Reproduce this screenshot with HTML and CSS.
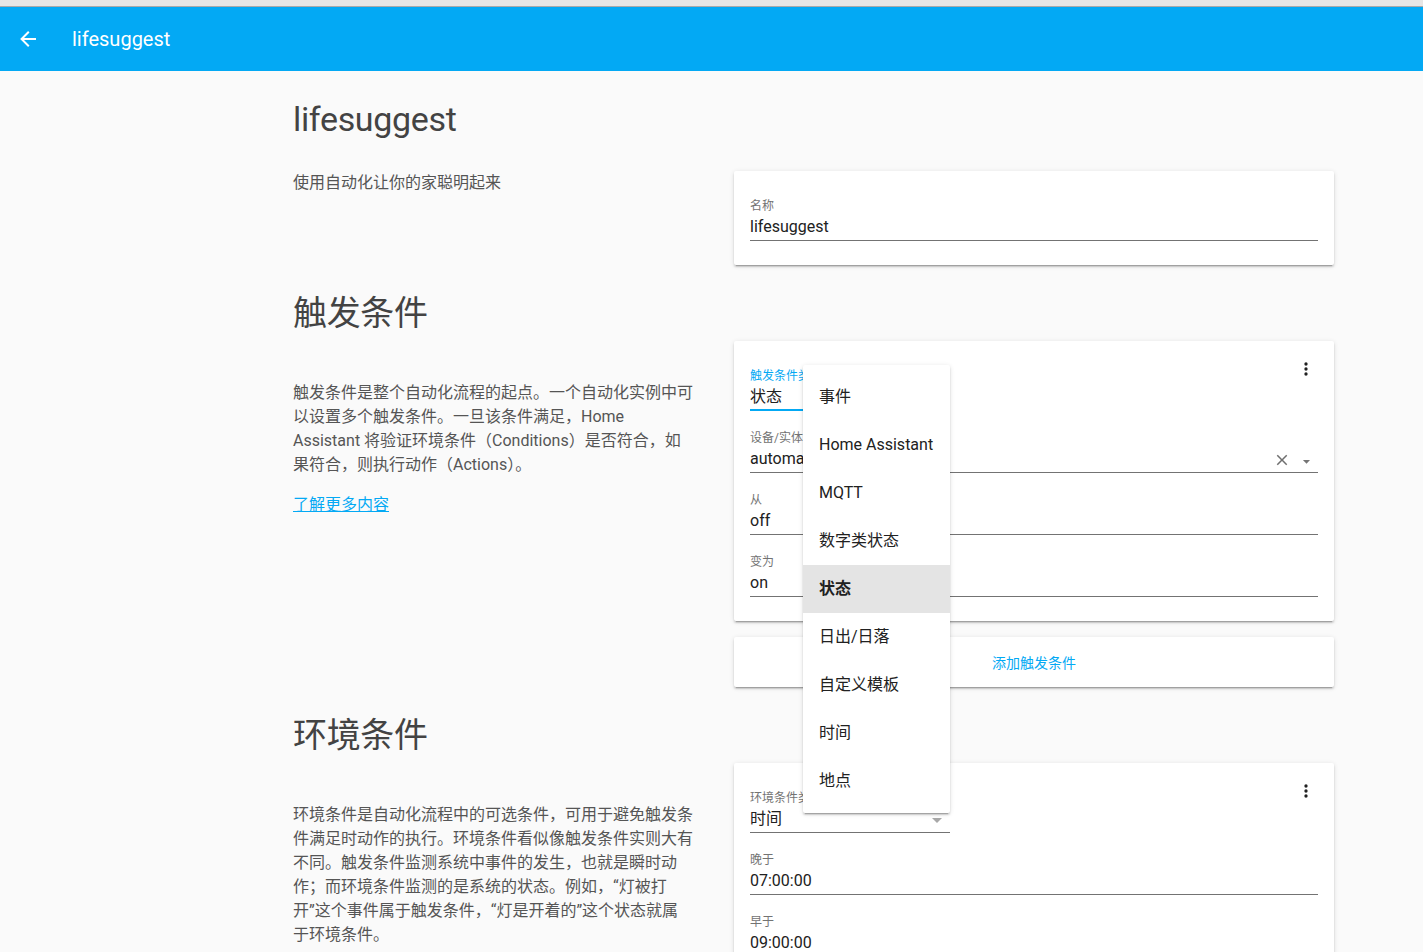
FILE: index.html
```html
<!DOCTYPE html>
<html lang="zh-CN">
<head>
<meta charset="utf-8">
<title>lifesuggest</title>
<link rel="stylesheet" href="styles.css">
</head>
<body>
<div class="browser-strip"></div>
<header class="toolbar">
  <span class="back-btn">
    <svg viewBox="0 0 24 24" width="24" height="24"><path fill="#fff" d="M20,11V13H8L13.5,18.5L12.08,19.92L4.16,12L12.08,4.08L13.5,5.5L8,11H20Z"/></svg>
  </span>
  <div class="toolbar-title">lifesuggest</div>
</header>

<main class="content">
  <section class="config-section">
    <h1 class="section-header">lifesuggest</h1>
    <div class="together">
      <div class="intro">使用自动化让你的家聪明起来</div>
      <div class="panel">
        <div class="card card-first">
          <div class="card-content">
            <div class="field">
              <div class="field-label">名称</div>
              <div class="field-value"><span class="value-text">lifesuggest</span></div>
            </div>
          </div>
        </div>
      </div>
    </div>
  </section>

  <section class="config-section">
    <h1 class="section-header">触发条件</h1>
    <div class="together">
      <div class="intro">
        <p class="intro-p">触发条件是整个自动化流程的起点。一个自动化实例中可<br>以设置多个触发条件。一旦该条件满足，Home<br>Assistant 将验证环境条件（Conditions）是否符合，如<br>果符合，则执行动作（Actions）。</p>
        <a class="learn-more" href="#">了解更多内容</a>
      </div>
      <div class="panel">
        <div class="card">
          <span class="menu-btn">
            <svg viewBox="0 0 24 24" width="20" height="20"><path fill="#212121" d="M12,16A2,2 0 0,1 14,18A2,2 0 0,1 12,20A2,2 0 0,1 10,18A2,2 0 0,1 12,16M12,10A2,2 0 0,1 14,12A2,2 0 0,1 12,14A2,2 0 0,1 10,12A2,2 0 0,1 12,10M12,4A2,2 0 0,1 14,6A2,2 0 0,1 12,8A2,2 0 0,1 10,6A2,2 0 0,1 12,4Z"/></svg>
          </span>
          <div class="card-content">
            <div class="field dropdown focused">
              <div class="field-label">触发条件类型</div>
              <div class="field-value"><span class="value-text">状态</span></div>
            </div>
            <div class="field">
              <div class="field-label">设备/实体</div>
              <div class="field-value">
                <span class="value-text">automation.lifesuggest</span>
                <span class="clear-btn">
                  <svg viewBox="0 0 24 24" width="18" height="18"><path fill="#6f6f6f" d="M19,6.41L17.59,5L12,10.59L6.41,5L5,6.41L10.59,12L5,17.59L6.41,19L12,13.41L17.59,19L19,17.59L13.41,12L19,6.41Z"/></svg>
                </span>
                <span class="toggle-btn">
                  <svg viewBox="0 0 24 24" width="17" height="17"><path fill="#757575" d="M7,10L12,15L17,10H7Z"/></svg>
                </span>
              </div>
            </div>
            <div class="field">
              <div class="field-label">从</div>
              <div class="field-value"><span class="value-text">off</span></div>
            </div>
            <div class="field">
              <div class="field-label">变为</div>
              <div class="field-value"><span class="value-text">on</span></div>
            </div>
          </div>

          <ul class="listbox">
            <li class="item">事件</li>
            <li class="item">Home Assistant</li>
            <li class="item">MQTT</li>
            <li class="item">数字类状态</li>
            <li class="item selected">状态</li>
            <li class="item">日出/日落</li>
            <li class="item">自定义模板</li>
            <li class="item">时间</li>
            <li class="item">地点</li>
          </ul>
        </div>
        <div class="card card-action">
          <span class="text-btn">添加触发条件</span>
        </div>
      </div>
    </div>
  </section>

  <section class="config-section">
    <h1 class="section-header">环境条件</h1>
    <div class="together">
      <div class="intro">
        <p class="intro-p">环境条件是自动化流程中的可选条件，可用于避免触发条<br>件满足时动作的执行。环境条件看似像触发条件实则大有<br>不同。触发条件监测系统中事件的发生，也就是瞬时动<br>作；而环境条件监测的是系统的状态。例如，“灯被打<br>开”这个事件属于触发条件，“灯是开着的”这个状态就属<br>于环境条件。</p>
      </div>
      <div class="panel">
        <div class="card">
          <span class="menu-btn">
            <svg viewBox="0 0 24 24" width="20" height="20"><path fill="#212121" d="M12,16A2,2 0 0,1 14,18A2,2 0 0,1 12,20A2,2 0 0,1 10,18A2,2 0 0,1 12,16M12,10A2,2 0 0,1 14,12A2,2 0 0,1 12,14A2,2 0 0,1 10,12A2,2 0 0,1 12,10M12,4A2,2 0 0,1 14,6A2,2 0 0,1 12,8A2,2 0 0,1 10,6A2,2 0 0,1 12,4Z"/></svg>
          </span>
          <div class="card-content">
            <div class="field dropdown">
              <div class="field-label">环境条件类型</div>
              <div class="field-value">
                <span class="value-text">时间</span>
                <span class="dd-arrow">
                  <svg viewBox="0 0 24 24" width="24" height="24"><path fill="#a8a8a8" d="M7,10L12,15L17,10H7Z"/></svg>
                </span>
              </div>
            </div>
            <div class="field">
              <div class="field-label">晚于</div>
              <div class="field-value"><span class="value-text">07:00:00</span></div>
            </div>
            <div class="field">
              <div class="field-label">早于</div>
              <div class="field-value"><span class="value-text">09:00:00</span></div>
            </div>
          </div>
        </div>
      </div>
    </div>
  </section>
</main>
</body>
</html>
```

FILE: styles.css
```css
* {
  box-sizing: border-box;
}

html,
body {
  margin: 0;
  padding: 0;
  height: 100%;
  overflow: hidden;
}

body {
  background: #fafafa;
  font-family: Roboto, "Noto Sans CJK SC", sans-serif;
  color: #212121;
}

.browser-strip {
  height: 7px;
  background: #e6e6e6;
  border-bottom: 1px solid #a9a9a9;
}

.toolbar {
  height: 64px;
  background: #03a9f4;
  color: #fff;
  display: flex;
  align-items: center;
  padding-left: 16px;
}

.back-btn {
  display: flex;
  width: 24px;
  height: 24px;
}

.toolbar-title {
  margin-left: 32px;
  font-size: 20px;
  font-weight: 400;
  line-height: 28px;
}

.content {
  padding-left: 293px;
}

.config-section {
  width: 1041px;
  padding-top: 28px;
}

.section-header {
  margin: 0;
  font-size: 34px;
  line-height: 40px;
  font-weight: 400;
  letter-spacing: -0.01em;
  color: #434343;
}

.together {
  display: flex;
  align-items: flex-start;
  margin-top: 32px;
}

.intro {
  flex: 0 0 400px;
  width: 400px;
  margin-right: 41px;
  font-size: 16px;
  line-height: 24px;
  color: #555;
}

.intro-p {
  margin: 16px 0;
  white-space: nowrap;
}

.learn-more {
  color: #03a9f4;
  text-decoration: underline;
}

.panel {
  flex: 0 0 600px;
  width: 600px;
  margin-top: -24px;
}

.card {
  position: relative;
  background: #fff;
  border-radius: 2px;
  box-shadow: 0 2px 2px 0 rgba(0, 0, 0, 0.14), 0 1px 5px 0 rgba(0, 0, 0, 0.12), 0 3px 1px -2px rgba(0, 0, 0, 0.2);
}

.card-first {
  margin-top: 24px;
}

.card + .card {
  margin-top: 16px;
}

.card-content {
  padding: 16px;
}

.menu-btn {
  position: absolute;
  top: 8px;
  right: 8px;
  width: 40px;
  height: 40px;
  display: flex;
  align-items: center;
  justify-content: center;
}

.field {
  height: 62px;
  padding: 10px 0 8px;
}

.field.dropdown {
  width: 200px;
}

.field-label {
  font-size: 12px;
  line-height: 18px;
  color: #737373;
  white-space: nowrap;
  overflow: hidden;
}

.field-value {
  display: flex;
  align-items: flex-start;
  height: 26px;
  padding-bottom: 1px;
  border-bottom: 1px solid #737373;
  font-size: 16px;
  line-height: 24px;
  color: #212121;
}

.focused .field-label {
  color: #03a9f4;
}

.focused .field-value {
  padding-bottom: 0;
  border-bottom: 2px solid #03a9f4;
}

.value-text {
  flex: 1 1 auto;
  white-space: nowrap;
  overflow: hidden;
}

.clear-btn {
  flex: 0 0 24px;
  height: 24px;
  padding-top: 4px;
  display: flex;
  justify-content: center;
  align-items: flex-start;
}

.toggle-btn {
  flex: 0 0 24px;
  height: 24px;
  padding-top: 6px;
  display: flex;
  justify-content: center;
  align-items: flex-start;
}

.dd-arrow {
  flex: 0 0 24px;
  height: 24px;
  padding-top: 1px;
  margin-right: 1px;
  display: flex;
}

.listbox {
  position: absolute;
  top: 24px;
  left: 69px;
  z-index: 10;
  width: 147px;
  margin: 0;
  padding: 8px 0;
  list-style: none;
  background: #fff;
  border-radius: 2px;
  box-shadow: 0 2px 2px 0 rgba(0, 0, 0, 0.14), 0 1px 5px 0 rgba(0, 0, 0, 0.12), 0 3px 1px -2px rgba(0, 0, 0, 0.2);
}

.item {
  height: 48px;
  padding: 0 16px;
  font-size: 16px;
  line-height: 48px;
  color: #212121;
  white-space: nowrap;
}

.item.selected {
  background: #e4e4e4;
  font-weight: 700;
}

.card-action {
  height: 50px;
  display: flex;
  align-items: center;
  justify-content: center;
}

.text-btn {
  font-size: 14px;
  color: #03a9f4;
}
```
